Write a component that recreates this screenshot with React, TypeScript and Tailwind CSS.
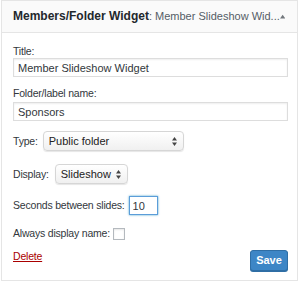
import React, { useState } from 'react';

const inputCls =
  'block w-full h-[19px] px-[4px] border border-[#dddddd] shadow-[inset_0_1px_2px_rgba(0,0,0,0.07)] bg-white text-[11px] text-[#32373c] outline-none';

const labelCls = 'text-[10.5px] tracking-[-0.2px]';

const SelectArrows: React.FC = () => (
  <svg width="5" height="9" viewBox="0 0 5 9" className="shrink-0">
    <path d="M2.5 0 L5 3.5 L0 3.5 Z" fill="#444" />
    <path d="M2.5 9 L5 5.5 L0 5.5 Z" fill="#444" />
  </svg>
);

const FakeSelect: React.FC<{ value: string; width: string }> = ({ value, width }) => (
  <div
    className={`${width} h-[20px] flex items-center justify-between pl-[5px] pr-[6px] rounded-[4px] bg-gradient-to-b from-white to-[#f0f0f0] border border-[#d6d6d6] shadow-[0_1px_1px_rgba(0,0,0,0.1)] text-[11px] text-[#222]`}
  >
    <span>{value}</span>
    <SelectArrows />
  </div>
);

const App: React.FC = () => {
  const [title, setTitle] = useState('Member Slideshow Widget');
  const [folder, setFolder] = useState('Sponsors');
  const [seconds, setSeconds] = useState('10');

  return (
    <div className="w-[300px] h-[285px] bg-white font-['Liberation_Sans',Arial,sans-serif] text-[11px] leading-[13px] text-[#32373c]">
      <div className="ml-[1px] w-[297px] border border-[#e5e5e5] bg-white">
        <div className="h-[32px] flex items-center justify-between pl-[11px] pr-[12px] bg-[#fafafa] border-b border-[#e5e5e5]">
          <div className="text-[#23282d] whitespace-nowrap">
            <span className="text-[12px] font-bold">Members/Folder Widget</span>
            <span className="text-[11px] text-[#555d66]">: Member Slideshow Wid...</span>
          </div>
          <svg width="7" height="5" viewBox="0 0 7 5">
            <path d="M3.5 0 L7 5 L0 5 Z" fill="#72777c" />
          </svg>
        </div>

        <div className="pl-[11px] pr-[9px] pt-[12px] pb-[9px]">
          <label className={`block ${labelCls}`}>Title:</label>
          <input className={inputCls} value={title} onChange={(e) => setTitle(e.target.value)} />

          <label className={`block mt-[10px] ${labelCls}`}>Folder/label name:</label>
          <input className={`${inputCls} mt-[2px]`} value={folder} onChange={(e) => setFolder(e.target.value)} />

          <div className="flex items-center gap-[5px] mt-[10px]">
            <span className={labelCls}>Type:</span>
            <FakeSelect value="Public folder" width="w-[141px]" />
          </div>

          <div className="flex items-center gap-[6px] mt-[13px]">
            <span className={labelCls}>Display:</span>
            <FakeSelect value="Slideshow" width="w-[73px]" />
          </div>

          <div className="flex items-center gap-[4px] mt-[12px]">
            <span className={labelCls}>Seconds between slides:</span>
            <input
              className="w-[29px] h-[19px] px-[3px] border border-[#5b9dd9] shadow-[0_0_2px_rgba(30,140,190,0.8)] text-[11px] text-[#32373c] outline-none"
              value={seconds}
              onChange={(e) => setSeconds(e.target.value)}
            />
          </div>

          <div className="flex items-center gap-[3px] mt-[12px]">
            <span className={labelCls}>Always display name:</span>
            <span className="w-[12px] h-[12px] border border-[#b4b9be] bg-white shadow-[inset_0_1px_2px_rgba(0,0,0,0.1)]" />
          </div>

          <div className="flex justify-between items-start mt-[10px]">
            <a href="#" className={`text-[#a00] underline ${labelCls}`}>Delete</a>
            <button className="w-[38px] h-[21px] rounded-[3px] bg-[#3d86c6] border border-[#2f6ea5] text-white text-[11px] font-bold shadow-[0_1px_0_#2f6ea5]">
              Save
            </button>
          </div>
        </div>
      </div>
    </div>
  );
};

export default App;
